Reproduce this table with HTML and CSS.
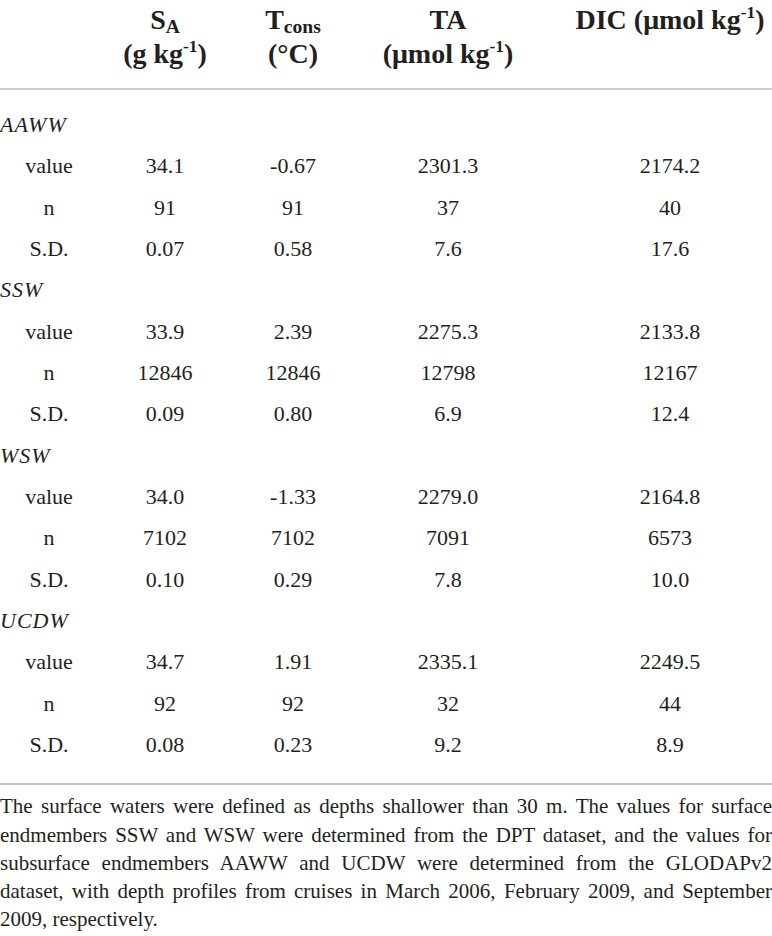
FILE: index.html
```html
<!DOCTYPE html>
<html>
<head>
  <title>Endmember properties</title>
  <meta name="viewport" content="width=device-width, initial-scale=1.0">
  <link rel="stylesheet" href="styles.css">
</head>
<body>
  <table class="data">
    <colgroup>
      <col class="c-label">
      <col class="c-sa">
      <col class="c-t">
      <col class="c-ta">
      <col class="c-dic">
    </colgroup>
    <thead>
      <tr>
        <th></th>
        <th>S<sub>A</sub><br>(g kg<sup>-1</sup>)</th>
        <th>T<sub>cons</sub><br>(°C)</th>
        <th class="ta">TA<br>(μmol kg<sup>-1</sup>)</th>
        <th>DIC (μmol kg<sup>-1</sup>)</th>
      </tr>
    </thead>
    <tbody>
      <!-- AAWW -->
      <tr class="group first"><td colspan="5">AAWW</td></tr>
      <tr><td>value</td><td>34.1</td><td>-0.67</td><td class="ta">2301.3</td><td>2174.2</td></tr>
      <tr><td>n</td><td>91</td><td>91</td><td class="ta">37</td><td>40</td></tr>
      <tr><td>S.D.</td><td>0.07</td><td>0.58</td><td class="ta">7.6</td><td>17.6</td></tr>

      <!-- SSW -->
      <tr class="group"><td colspan="5">SSW</td></tr>
      <tr><td>value</td><td>33.9</td><td>2.39</td><td class="ta">2275.3</td><td>2133.8</td></tr>
      <tr><td>n</td><td>12846</td><td>12846</td><td class="ta">12798</td><td>12167</td></tr>
      <tr><td>S.D.</td><td>0.09</td><td>0.80</td><td class="ta">6.9</td><td>12.4</td></tr>

      <!-- WSW -->
      <tr class="group"><td colspan="5">WSW</td></tr>
      <tr><td>value</td><td>34.0</td><td>-1.33</td><td class="ta">2279.0</td><td>2164.8</td></tr>
      <tr><td>n</td><td>7102</td><td>7102</td><td class="ta">7091</td><td>6573</td></tr>
      <tr><td>S.D.</td><td>0.10</td><td>0.29</td><td class="ta">7.8</td><td>10.0</td></tr>

      <!-- UCDW -->
      <tr class="group"><td colspan="5">UCDW</td></tr>
      <tr><td>value</td><td>34.7</td><td>1.91</td><td class="ta">2335.1</td><td>2249.5</td></tr>
      <tr><td>n</td><td>92</td><td>92</td><td class="ta">32</td><td>44</td></tr>
      <tr class="last"><td>S.D.</td><td>0.08</td><td>0.23</td><td class="ta">9.2</td><td>8.9</td></tr>
    </tbody>
  </table>

  <p class="note">The surface waters were defined as depths shallower than 30 m. The values for surface endmembers SSW and WSW were determined from the DPT dataset, and the values for subsurface endmembers AAWW and UCDW were determined from the GLODAPv2 dataset, with depth profiles from cruises in March 2006, February 2009, and September 2009, respectively.</p>
</body>
</html>
```

FILE: styles.css
```css
body {
  margin: 0;
  width: 772px;
  font-family: "Liberation Serif", "DejaVu Serif", serif;
  color: #231f20;
  background-color: white;
}
.data {
  width: 772px;
  border-collapse: collapse;
  table-layout: fixed;
}
.c-label { width: 98px; }
.c-sa { width: 134px; }
.c-t { width: 122px; }
.c-ta { width: 214px; }
.c-dic { width: 204px; }
.data th {
  font-size: 28px;
  line-height: 34px;
  font-weight: bold;
  text-align: center;
  vertical-align: top;
  padding: 3px 0 17px 0;
  border-bottom: 2px solid #cccccc;
  white-space: nowrap;
}
.data th sub {
  font-size: 0.7em;
  line-height: 0;
  vertical-align: -0.22em;
}
.data sup {
  font-size: 0.62em;
  line-height: 0;
  vertical-align: 0.62em;
}
.data td {
  font-size: 22px;
  line-height: 41.33px;
  height: 41.33px;
  padding: 0;
  text-align: center;
  white-space: nowrap;
}
.data .ta {
  padding-right: 26px;
}
.data .group td {
  text-align: left;
  font-style: italic;
  letter-spacing: 1px;
}
.data .first td {
  padding-top: 14px;
}
.data .last td {
  padding-bottom: 18px;
}
.note {
  margin: 0;
  border-top: 2px solid #c4c4c4;
  padding-top: 7px;
  font-size: 21px;
  line-height: 28.3px;
  text-align: justify;
}
```
